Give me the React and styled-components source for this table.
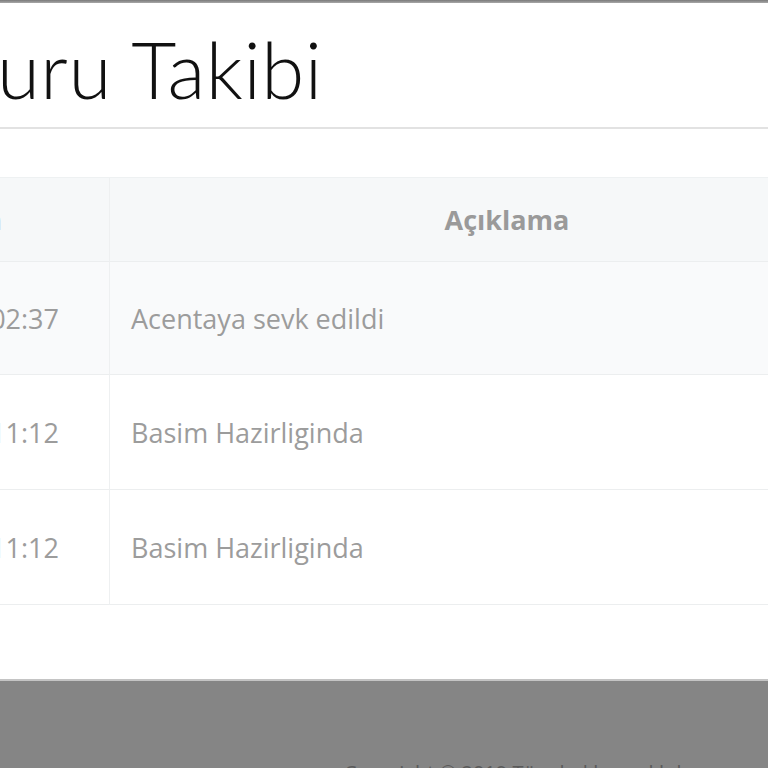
import React from "react";
import styled, { createGlobalStyle } from "styled-components";

const GlobalStyle = createGlobalStyle`
  html, body {
    margin: 0;
    padding: 0;
    background: #ffffff;
    overflow: hidden;
  }
  body {
    font-family: "Open Sans", "Liberation Sans", sans-serif;
  }
`;

const Page = styled.div`
  width: 904px;
  height: 768px;
  display: flex;
  flex-direction: column;
  overflow: hidden;

  & > * {
    flex-shrink: 0;
  }
`;

const TopBar = styled.div`
  height: 3px;
  background: linear-gradient(#7a7a7a, #a8a8a8);
`;

const TitleBar = styled.div`
  height: 126px;
  display: flex;
  align-items: center;
  border-bottom: 2px solid #e2e2e2;
  box-sizing: border-box;
`;

const Title = styled.h1`
  margin: 8px 0 0 -3px;
  font-family: Lato, "Open Sans", sans-serif;
  font-weight: 300;
  font-size: 78px;
  color: #111;
  letter-spacing: 0.5px;
`;

const Table = styled.div`
  margin-top: 48px;
  display: grid;
  grid-template-columns: 110px 794px;
  border-top: 1px solid #eef1f2;
`;

const Cell = styled.div`
  height: ${(p) => p.h}px;
  box-sizing: border-box;
  display: flex;
  align-items: center;
  overflow: hidden;
  white-space: nowrap;
  background: ${(p) => (p.head ? "#f6f8f9" : p.highlight ? "#f9fafb" : "#ffffff")};
  border-bottom: 1px solid #eceeef;
  border-right: ${(p) => (p.first ? "1px solid #eef0f1" : "none")};
  justify-content: ${(p) => (p.first ? "flex-end" : p.head ? "center" : "flex-start")};
  padding: ${(p) => (p.first ? (p.head ? "0 107px 0 0" : "0 50px 0 0") : "0 21px")};
  font-size: 27px;
  font-weight: ${(p) => (p.head ? 700 : 400)};
  color: ${(p) => (p.head ? "#9a9a9a" : "#9c9c9c")};
`;

const Footer = styled.div`
  margin-top: 74px;
  flex: 1;
  background: #858585;
  border-top: 2px solid #c4c4c4;
  display: flex;
  justify-content: center;
  padding: 78px 0 0 140px;
  font-size: 20px;
  color: #5a5a5a;
  white-space: nowrap;
`;

const rows = [
  { time: "14.03.2019 02:37", desc: "Acentaya sevk edildi" },
  { time: "12.03.2019 11:12", desc: "Basim Hazirliginda" },
  { time: "12.03.2019 11:12", desc: "Basim Hazirliginda" },
];

export default function App() {
  return (
    <>
      <GlobalStyle />
      <Page>
        <TopBar />
        <TitleBar>
          <Title>uru Takibi</Title>
        </TitleBar>
        <Table>
          <Cell head first h={84}>Tarih</Cell>
          <Cell head h={84}>Açıklama</Cell>
          {rows.map((r, i) => (
            <React.Fragment key={i}>
              <Cell first highlight={i === 0} h={i === 0 ? 113 : 115}>
                {r.time}
              </Cell>
              <Cell highlight={i === 0} h={i === 0 ? 113 : 115}>
                {r.desc}
              </Cell>
            </React.Fragment>
          ))}
        </Table>
        <Footer>Copyright © 2019 Tüm hakları saklıdır.</Footer>
      </Page>
    </>
  );
}
